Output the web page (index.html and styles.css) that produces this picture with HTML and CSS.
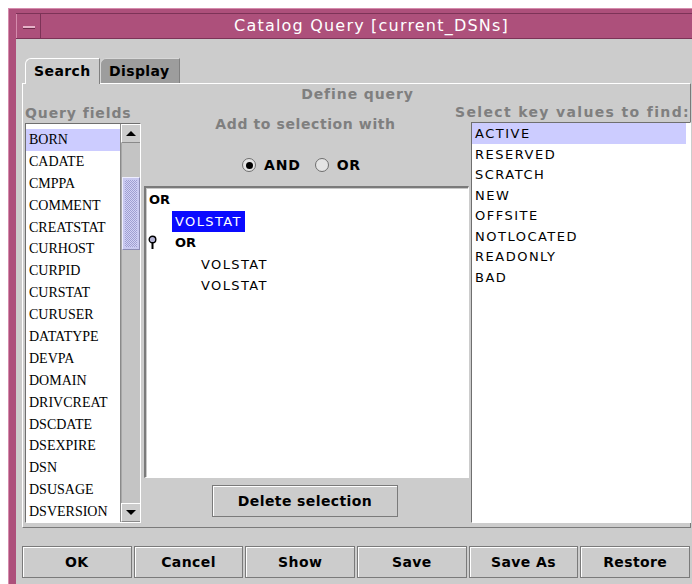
FILE: index.html
```html
<!DOCTYPE html>
<html lang="en">
<head>
<meta charset="utf-8">
<title>Catalog Query</title>
<link rel="stylesheet" href="styles.css">
</head>
<body>
<div class="window">
  <div class="titlebar">
    <div class="minbtn"><span class="dash"></span></div>
    <div class="title">Catalog Query [current_DSNs]</div>
  </div>
  <div class="content">
    <div class="tabs">
      <div class="tab active">Search</div>
      <div class="tab">Display</div>
    </div>
    <div class="panel">
      <div class="panel-head">Define query</div>
      <div class="columns">
        <div class="col col-fields">
          <div class="label">Query fields</div>
          <div class="scrollpane">
            <ul class="list fields">
              <li class="sel">BORN</li>
              <li>CADATE</li>
              <li>CMPPA</li>
              <li>COMMENT</li>
              <li>CREATSTAT</li>
              <li>CURHOST</li>
              <li>CURPID</li>
              <li>CURSTAT</li>
              <li>CURUSER</li>
              <li>DATATYPE</li>
              <li>DEVPA</li>
              <li>DOMAIN</li>
              <li>DRIVCREAT</li>
              <li>DSCDATE</li>
              <li>DSEXPIRE</li>
              <li>DSN</li>
              <li>DSUSAGE</li>
              <li>DSVERSION</li>
            </ul>
            <div class="vscroll">
              <div class="arrow up"><span class="tri"></span></div>
              <div class="track"><div class="thumb"></div></div>
              <div class="arrow down"><span class="tri"></span></div>
            </div>
          </div>
        </div>
        <div class="col col-query">
          <div class="label">Add to selection with</div>
          <div class="radios">
            <label class="radio"><span class="dot on"></span>AND</label>
            <label class="radio"><span class="dot"></span>OR</label>
          </div>
          <div class="tree">
            <div class="node op">OR</div>
            <div class="node lvl1"><span class="picked">VOLSTAT</span></div>
            <div class="node op lvl0h">
              <svg class="handle" width="9" height="15" viewBox="0 0 9 15">
                <line x1="4.5" y1="7" x2="4.5" y2="14" stroke="#000" stroke-width="2"/>
                <circle cx="4.5" cy="4.5" r="3.3" fill="#b4b4d4" stroke="#000" stroke-width="1.4"/>
              </svg>
              <span class="op-text">OR</span>
            </div>
            <div class="node lvl2">VOLSTAT</div>
            <div class="node lvl2">VOLSTAT</div>
          </div>
          <div class="btn-row">
            <button class="btn delete">Delete selection</button>
          </div>
        </div>
        <div class="col col-values">
          <div class="label wide">Select key values to find:</div>
          <ul class="list values">
            <li class="sel">ACTIVE</li>
            <li>RESERVED</li>
            <li>SCRATCH</li>
            <li>NEW</li>
            <li>OFFSITE</li>
            <li>NOTLOCATED</li>
            <li>READONLY</li>
            <li>BAD</li>
          </ul>
        </div>
      </div>
    </div>
    <div class="actions">
      <button class="btn">OK</button>
      <button class="btn">Cancel</button>
      <button class="btn">Show</button>
      <button class="btn">Save</button>
      <button class="btn">Save As</button>
      <button class="btn">Restore</button>
    </div>
  </div>
</div>
</body>
</html>
```

FILE: styles.css
```css
html, body {
  margin: 0;
  padding: 0;
  background: #ffffff;
  overflow: hidden;
  font-family: "DejaVu Sans", sans-serif;
}

/* window frame */
.window {
  margin: 8px 0 0 8px;
  width: 700px;
  height: 600px;
  box-sizing: border-box;
  background: #ad507b;
  border-top: 1px solid #d58cad;
  border-left: 1px solid #d58cad;
  padding: 4px 6px 0 7px;
  display: flex;
  flex-direction: column;
}

.titlebar {
  height: 24px;
  display: flex;
  border-top: 1px solid #7c3357;
  border-bottom: 1px solid #7c3357;
  background: #ad507b;
}

.minbtn {
  width: 23px;
  border-left: 1px solid #d58cad;
  border-right: 1px solid #7c3357;
  display: flex;
  align-items: center;
  justify-content: center;
}

.minbtn .dash {
  width: 12px;
  height: 2px;
  background: #e6b2c8;
  border-bottom: 1px solid #6e2a4a;
  margin-top: 2px;
}

.title {
  flex: 1;
  text-align: center;
  color: #ffffff;
  font-size: 16px;
  letter-spacing: 1.2px;
  line-height: 24px;
}

/* dialog body */
.content {
  flex: 1;
  background: #cccccc;
  padding: 19px 0 0 6px;
}

.tabs {
  display: flex;
  padding-left: 3px;
  height: 26px;
  position: relative;
  z-index: 1;
  margin-bottom: -1px;
}

.tab {
  box-sizing: border-box;
  height: 26px;
  padding-left: 8px;
  font-weight: bold;
  font-size: 14px;
  letter-spacing: 0.4px;
  line-height: 25px;
  color: #000;
  border-top: 1px solid #ffffff;
  border-left: 1px solid #ffffff;
  border-right: 1px solid #808080;
  border-top-left-radius: 6px 6px;
}

.tab.active {
  width: 75px;
  background: #cccccc;
}

.tab:not(.active) {
  width: 80px;
  height: 25px;
  background: #9d9d9d;
  border-top-color: #d8d8d8;
  border-left-color: #d8d8d8;
}

.panel {
  width: 669px;
  height: 445px;
  box-sizing: border-box;
  border-top: 1px solid #ffffff;
  border-left: 1px solid #ffffff;
  border-right: 1px solid #7a7a7a;
  border-bottom: 1px solid #7a7a7a;
  padding: 2px 0 0 2px;
}

.panel-head,
.label {
  color: #7f7f7f;
  font-weight: bold;
  font-size: 14px;
  letter-spacing: 0.9px;
  white-space: nowrap;
}

.panel-head {
  text-align: center;
  line-height: 17px;
  height: 17px;
}

.columns {
  display: grid;
  grid-template-columns: 116px 325px 219px;
  column-gap: 3px;
  height: 420px;
}

.columns .col-values {
  margin-left: -1px;
}

.col {
  display: flex;
  flex-direction: column;
}

.col-fields .label {
  line-height: 20px;
  height: 20px;
}

.col-values .label {
  line-height: 19px;
  height: 19px;
  margin-left: -16px;
  letter-spacing: 1.35px;
}

/* query field list with scrollbar */
.scrollpane {
  height: 400px;
  box-sizing: border-box;
  border: 1px solid #6f6f6f;
  border-right-color: #ffffff;
  border-bottom-color: #ffffff;
  display: flex;
  background: #ffffff;
}

.list {
  list-style: none;
  margin: 0;
  padding: 0;
  overflow: hidden;
}

.list.fields {
  flex: 1;
  padding-top: 5px;
  font-family: "Liberation Serif", serif;
  font-size: 14px;
  color: #000;
}

.list.fields li {
  height: 21.9px;
  line-height: 22px;
  padding-left: 3px;
}

.list li.sel {
  background: #ccccff;
}

.vscroll {
  width: 19px;
  background: #c8c8c8;
  border-left: 1px solid #8a8a8a;
  display: flex;
  flex-direction: column;
}

.arrow {
  height: 19px;
  box-sizing: border-box;
  background: #cccccc;
  border-top: 1px solid #ffffff;
  border-left: 1px solid #ffffff;
  border-bottom: 1px solid #8a8a8a;
  display: flex;
  align-items: center;
  justify-content: center;
}

.arrow .tri {
  width: 0;
  height: 0;
  border-left: 5px solid transparent;
  border-right: 5px solid transparent;
}

.arrow.up .tri {
  border-bottom: 5px solid #000;
}

.arrow.down .tri {
  border-top: 5px solid #000;
}

.track {
  flex: 1;
  background: #c4c4c4;
  border-left: 1px solid #a8a8a8;
}

.thumb {
  margin-top: 34px;
  height: 73px;
  box-sizing: border-box;
  border: 1px solid #8c8cb4;
  border-top-color: #eeeeff;
  border-left-color: #eeeeff;
  background: repeating-conic-gradient(#9e9ed2 0 25%, #d2d2f4 0 50%) 0 0 / 2px 2px;
  box-shadow: inset 0 0 0 2px #c8c8f0;
}

/* middle column */
.col-query {
  padding-top: 13px;
  box-sizing: border-box;
}

.col-query .label {
  line-height: 16px;
  height: 16px;
  letter-spacing: 0.6px;
  text-align: center;
  margin-left: -2px;
}

.radios {
  margin-top: 25px;
  height: 16px;
  display: flex;
  justify-content: center;
  gap: 14px;
  padding-right: 10px;
}

.radio {
  display: flex;
  align-items: center;
  gap: 8px;
  font-weight: bold;
  font-size: 14px;
  letter-spacing: 0.8px;
  color: #000;
}

.dot {
  width: 14px;
  height: 14px;
  box-sizing: border-box;
  border-radius: 50%;
  border: 1px solid #6e6e6e;
  background: #e4e4e4;
  position: relative;
}

.dot.on::after {
  content: "";
  position: absolute;
  left: 2.5px;
  top: 2.5px;
  width: 7px;
  height: 7px;
  border-radius: 50%;
  background: #000;
}

.tree {
  margin-top: 13px;
  height: 292px;
  box-sizing: border-box;
  background: #ffffff;
  border: 2px solid #7a7a7a;
  border-right: 1px solid #ffffff;
  border-bottom: 1px solid #ffffff;
  box-shadow: inset 1px 1px 0 #c8c8c8;
  padding-top: 1px;
  font-size: 13px;
  letter-spacing: 1.4px;
  color: #000;
}

.node {
  height: 21.5px;
  line-height: 21.5px;
  display: flex;
  align-items: center;
  white-space: nowrap;
}

.node.op {
  font-weight: bold;
  letter-spacing: 0;
  padding-left: 3px;
}

.node.lvl1 {
  padding-left: 26px;
}

.picked {
  background: #0a0aff;
  color: #ffffff;
  padding: 0 3px;
  height: 21.5px;
  line-height: 21.5px;
}

.node.lvl0h {
  padding-left: 2px;
}

.handle {
  margin-right: 18px;
}

.node.lvl2 {
  padding-left: 55px;
}

.btn-row {
  margin-top: 7px;
  display: flex;
  justify-content: center;
  padding-right: 3px;
}

.btn {
  box-sizing: border-box;
  height: 32px;
  background: #cccccc;
  border: 1px solid #7a7a7a;
  box-shadow: inset 1px 1px 0 #ffffff;
  font-family: "DejaVu Sans", sans-serif;
  font-weight: bold;
  font-size: 14px;
  letter-spacing: 0.4px;
  color: #000;
  padding: 0;
}

.btn.delete {
  width: 186px;
}

/* key values list */
.list.values {
  height: 401px;
  box-sizing: border-box;
  border: 1px solid #6f6f6f;
  border-right-color: #ffffff;
  border-bottom-color: #ffffff;
  background: #ffffff;
  padding-right: 4px;
  font-size: 13px;
  letter-spacing: 1.5px;
  color: #000;
}

.list.values li {
  height: 20.5px;
  line-height: 21px;
  padding-left: 3px;
}

/* bottom command row */
.actions {
  margin-top: 18px;
  width: 668px;
  display: flex;
  gap: 2px;
}

.actions .btn {
  flex: 1;
}
```
